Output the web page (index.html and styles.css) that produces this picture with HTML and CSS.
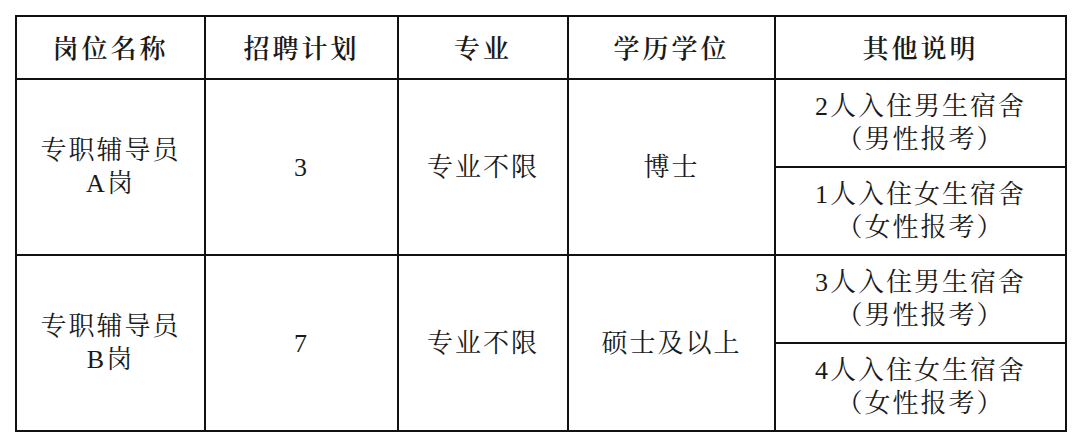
FILE: index.html
```html
<!DOCTYPE html>
<html lang="zh-CN">
<head>
<meta charset="utf-8">
<link rel="stylesheet" href="styles.css">
</head>
<body>
<table class="grid">
  <colgroup>
    <col class="c1"><col class="c2"><col class="c3"><col class="c4"><col class="c5">
  </colgroup>
  <thead>
    <tr class="head">
      <th>岗位名称</th><th>招聘计划</th><th>专业</th><th>学历学位</th><th>其他说明</th>
    </tr>
  </thead>
  <tbody>
    <tr class="sub">
      <td rowspan="2">专职辅导员<br>A岗</td>
      <td rowspan="2">3</td>
      <td rowspan="2">专业不限</td>
      <td rowspan="2">博士</td>
      <td>2人入住男生宿舍<br>（男性报考）</td>
    </tr>
    <tr class="sub">
      <td>1人入住女生宿舍<br>（女性报考）</td>
    </tr>
    <tr class="sub">
      <td rowspan="2">专职辅导员<br>B岗</td>
      <td rowspan="2">7</td>
      <td rowspan="2">专业不限</td>
      <td rowspan="2">硕士及以上</td>
      <td>3人入住男生宿舍<br>（男性报考）</td>
    </tr>
    <tr class="sub">
      <td>4人入住女生宿舍<br>（女性报考）</td>
    </tr>
  </tbody>
</table>
</body>
</html>
```

FILE: styles.css
```css
html, body {
  margin: 0;
  padding: 0;
  background: #ffffff;
}
body {
  padding: 15px 0 0 15px;
  font-family: "Liberation Serif", "Noto Serif CJK SC", "Noto Sans CJK SC", serif;
  color: #1a1a1a;
}
.grid {
  border-collapse: collapse;
  table-layout: fixed;
  width: 1050px;
}
.c1 { width: 189px; }
.c2 { width: 193px; }
.c3 { width: 170px; }
.c4 { width: 207px; }
.c5 { width: 291px; }
.grid th, .grid td {
  border: 2px solid #111;
  text-align: center;
  vertical-align: middle;
  padding: 0;
  font-size: 26px;
  line-height: 33px;
  letter-spacing: 2px;
}
.grid th {
  font-weight: 600;
  letter-spacing: 3px;
  height: 58px;
  padding-top: 3px;
}
.grid .sub td {
  height: 86px;
}
```
